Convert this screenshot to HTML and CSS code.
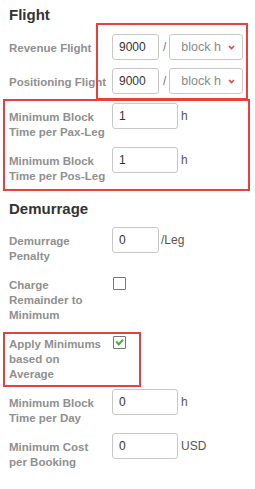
FILE: index.html
```html
<!DOCTYPE html>
<html>
  <head>
    <title>Flight Settings</title>
    <link rel="stylesheet" href="styles.css">
  </head>
  <body>
    <h2 class="section-title">Flight</h2>
    <div class="rows">
      <div class="row">
        <label class="row-label">Revenue Flight</label>
        <div class="field">
          <input class="text-input short" type="text" value="9000" />
          <span class="slash">/</span>
          <div class="select">block h<svg class="chevron" width="7" height="5" viewBox="0 0 7 5"><path d="M1 1 L3.5 3.5 L6 1" fill="none" stroke="#e8443a" stroke-width="1.6"/></svg></div>
        </div>
      </div>
      <div class="row">
        <label class="row-label">Positioning Flight</label>
        <div class="field">
          <input class="text-input short" type="text" value="9000" />
          <span class="slash">/</span>
          <div class="select">block h<svg class="chevron" width="7" height="5" viewBox="0 0 7 5"><path d="M1 1 L3.5 3.5 L6 1" fill="none" stroke="#e8443a" stroke-width="1.6"/></svg></div>
        </div>
      </div>
    </div>
    <div class="rows tight">
      <div class="row">
        <label class="row-label">Minimum Block<br>Time per Pax-Leg</label>
        <div class="field">
          <input class="text-input" type="text" value="1" />
          <span class="unit">h</span>
        </div>
      </div>
      <div class="row">
        <label class="row-label">Minimum Block<br>Time per Pos-Leg</label>
        <div class="field">
          <input class="text-input" type="text" value="1" />
          <span class="unit">h</span>
        </div>
      </div>
    </div>

    <h2 class="section-title second">Demurrage</h2>
    <div class="rows tight">
      <div class="row">
        <label class="row-label">Demurrage<br>Penalty</label>
        <div class="field">
          <input class="text-input short" type="text" value="0" />
          <span class="unit leg">/Leg</span>
        </div>
      </div>
      <div class="row">
        <label class="row-label">Charge<br>Remainder to<br>Minimum</label>
        <div class="field">
          <span class="checkbox"></span>
        </div>
      </div>
      <div class="row">
        <label class="row-label">Apply Minimums<br>based on<br>Average</label>
        <div class="field">
          <span class="checkbox"><svg width="11" height="11" viewBox="0 0 11 11"><path d="M2.2 4.6 L4.8 7.4 L9 2.6" fill="none" stroke="#4caf3c" stroke-width="2.2"/></svg></span>
        </div>
      </div>
      <div class="row">
        <label class="row-label">Minimum Block<br>Time per Day</label>
        <div class="field">
          <input class="text-input" type="text" value="0" />
          <span class="unit">h</span>
        </div>
      </div>
      <div class="row">
        <label class="row-label">Minimum Cost<br>per Booking</label>
        <div class="field">
          <input class="text-input" type="text" value="0" />
          <span class="unit">USD</span>
        </div>
      </div>
    </div>

    <!-- highlight boxes drawn over the form -->
    <div class="highlight box-rates"></div>
    <div class="highlight box-minimums"></div>
    <div class="highlight box-average"></div>
  </body>
</html>
```

FILE: styles.css
```css
  * {
    margin: 0;
    padding: 0;
    box-sizing: border-box;
  }
  body {
    position: relative;
    background-color: #fff;
    font-family: "Liberation Sans", Arial, sans-serif;
    padding: 6px 0 0 9px;
    width: 255px;
    height: 489px;
    overflow: hidden;
  }
  .section-title {
    font-size: 15px;
    line-height: 18px;
    font-weight: bold;
    color: #333;
    margin-bottom: 10px;
  }
  .section-title.second {
    margin-top: 16px;
    margin-bottom: 9px;
  }
  .rows {
    display: flex;
    flex-direction: column;
    gap: 8px;
  }
  .rows.tight {
    gap: 7px;
    margin-top: 9px;
  }
  .section-title + .rows.tight {
    margin-top: 0;
  }
  .row {
    display: flex;
    align-items: flex-start;
  }
  .row-label {
    width: 103px;
    flex-shrink: 0;
    padding: 7px 0 0 0;
    font-size: 11.5px;
    line-height: 15px;
    font-weight: bold;
    color: #909090;
    white-space: nowrap;
  }
  .field {
    display: flex;
    align-items: flex-start;
  }
  .text-input {
    width: 66px;
    height: 26px;
    border: 1px solid #c8c8c8;
    border-radius: 3px;
    padding: 0 6px;
    font-family: "Liberation Sans", Arial, sans-serif;
    font-size: 12px;
    color: #333;
    outline: none;
  }
  .text-input.short {
    width: 47px;
  }
  .slash {
    font-size: 12px;
    line-height: 15px;
    padding-top: 6px;
    color: #777;
    margin: 0 3px 0 4px;
  }
  .select {
    width: 74px;
    height: 26px;
    border: 1px solid #c8c8c8;
    border-radius: 3px;
    padding-left: 11px;
    font-size: 12.5px;
    line-height: 24px;
    color: #8a8a8a;
    position: relative;
  }
  .chevron {
    position: absolute;
    right: 7px;
    top: 10px;
  }
  .unit {
    font-size: 12px;
    line-height: 15px;
    padding-top: 6px;
    margin-left: 3px;
    color: #555;
  }
  .unit.leg {
    margin-left: 2px;
  }
  .checkbox {
    display: block;
    width: 13px;
    height: 13px;
    margin: 6px 0 0 1px;
    border: 1.5px solid #777;
    border-radius: 1px;
  }
  .checkbox svg {
    display: block;
    margin: -0.5px 0 0 -0.5px;
  }
  .highlight {
    position: absolute;
    border: 2px solid #e8403c;
  }
  .box-rates {
    left: 96px;
    top: 23px;
    width: 152px;
    height: 77px;
  }
  .box-minimums {
    left: 3px;
    top: 99px;
    width: 247px;
    height: 92px;
  }
  .box-average {
    left: 3px;
    top: 332px;
    width: 138px;
    height: 55px;
  }
```
